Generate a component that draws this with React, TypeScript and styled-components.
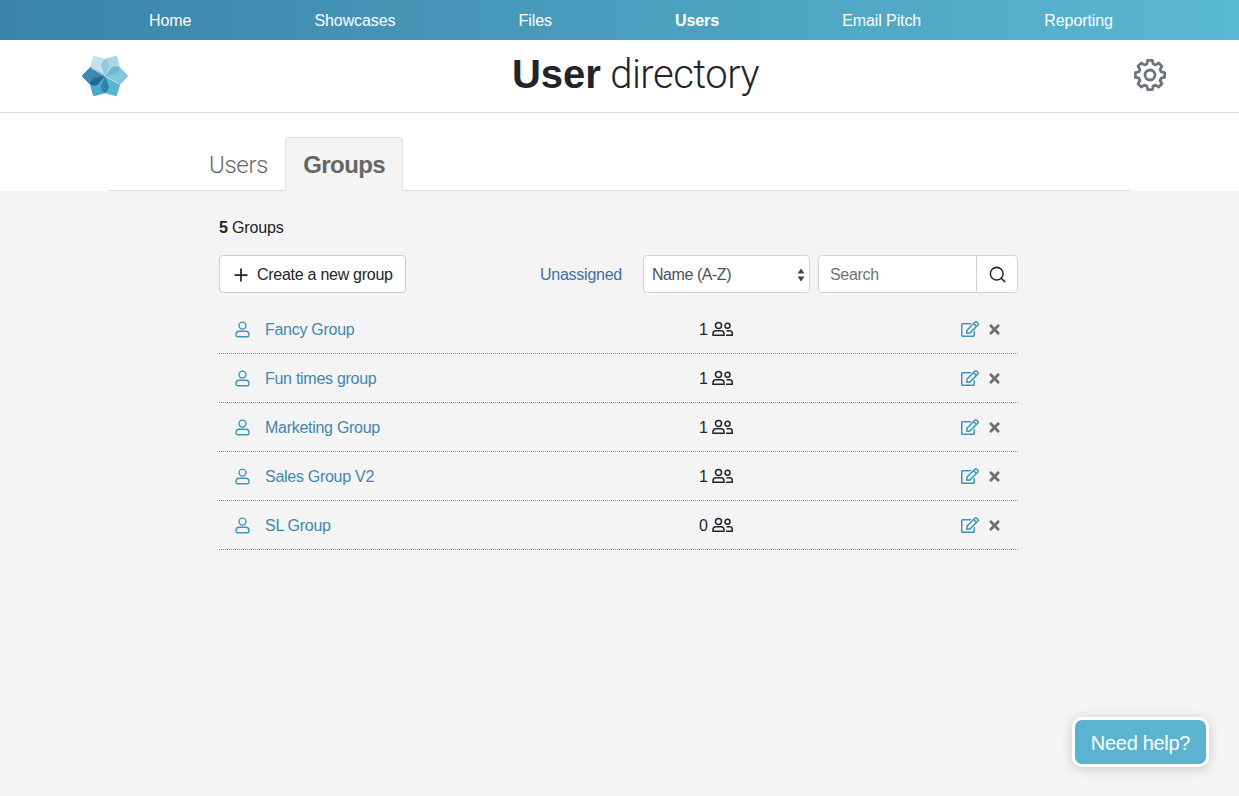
import React from "react";
import styled, { createGlobalStyle } from "styled-components";
import { Plus, Search } from "lucide-react";
import { FaRegEdit, FaTimes } from "react-icons/fa";

const Global = createGlobalStyle`
  html, body { margin: 0; padding: 0; height: 100%; }
  body { font-family: "Liberation Sans", Arial, sans-serif; background: #f4f4f4; color: #212529; }
  #root { height: 100%; }
`;

const Page = styled.div`
  height: 796px;
  position: relative;
  overflow: hidden;
  background: #f4f4f4;
`;

const Nav = styled.nav`
  height: 40px;
  display: flex;
  align-items: center;
  gap: 123.2px;
  padding-left: 149px;
  background: linear-gradient(90deg, #3a84a9 0%, #5ab7d3 100%);
`;

const NavLink = styled.a<{ $active?: boolean }>`
  color: #fff;
  font-size: 16px;
  letter-spacing: -0.1px;
  padding-top: 1px;
  font-weight: ${(p) => (p.$active ? 700 : 400)};
  white-space: nowrap;
`;

const Header = styled.header`
  height: 72px;
  background: #fff;
  border-bottom: 1px solid #dcdcdc;
  display: grid;
  grid-template-columns: 1fr auto 1fr;
  align-items: center;
  padding: 0 72px 0 81px;
`;

const LogoSlot = styled.div`
  display: flex;
  align-items: center;
`;

const Title = styled.h1`
  margin: 0 0 4px;
  font-size: 40px;
  line-height: 48px;
  font-weight: 300;
  font-family: Roboto, "Liberation Sans", sans-serif;
  letter-spacing: -0.5px;
  color: #212529;
  padding-left: 23px;
  b {
    font-family: "Liberation Sans", Arial, sans-serif;
    font-weight: 700;
    letter-spacing: 0;
  }
`;

const GearSlot = styled.div`
  display: flex;
  justify-content: flex-end;
  margin-bottom: 2px;
`;

const TabBand = styled.div`
  height: 78px;
  background: #fff;
  padding: 0 108px 0 107px;
  box-sizing: border-box;
`;

const TabRow = styled.div`
  height: 78px;
  box-sizing: border-box;
  border-bottom: 1px solid #dee2e6;
  display: flex;
  align-items: flex-end;
  padding-left: 84px;
`;

const Tab = styled.a<{ $active?: boolean }>`
  box-sizing: border-box;
  height: 54px;
  margin-bottom: -1px;
  margin-left: ${(p) => (p.$active ? "-1px" : "0")};
  padding: 2px 17px 0;
  display: flex;
  align-items: center;
  font-size: 24px;
  letter-spacing: ${(p) => (p.$active ? "-0.55px" : "-0.3px")};
  color: #666;
  font-family: ${(p) => (p.$active ? '"Liberation Sans", Arial, sans-serif' : 'Roboto, "Liberation Sans", sans-serif')};
  font-weight: ${(p) => (p.$active ? 700 : 300)};
  background: ${(p) => (p.$active ? "#f4f4f4" : "transparent")};
  border: 1px solid ${(p) => (p.$active ? "#dee2e6" : "transparent")};
  border-bottom-color: ${(p) => (p.$active ? "#f4f4f4" : "transparent")};
  border-radius: 4px 4px 0 0;
`;

const Content = styled.main`
  width: 799px;
  margin-left: 219px;
  padding-top: 27px;
`;

const Count = styled.div`
  font-size: 16px;
  line-height: 20px;
  letter-spacing: -0.15px;
  color: #212529;
  b { font-weight: 700; }
`;

const Toolbar = styled.div`
  margin-top: 17px;
  height: 38px;
  display: flex;
  align-items: stretch;
`;

const CreateButton = styled.button`
  box-sizing: border-box;
  width: 187px;
  display: flex;
  align-items: center;
  gap: 6px;
  padding: 1px 0 0 11px;
  background: #fff;
  border: 1px solid #ccc;
  border-radius: 4px;
  font: inherit;
  font-size: 16px;
  letter-spacing: -0.27px;
  color: #212529;
`;

const Unassigned = styled.a`
  margin-left: auto;
  margin-right: 21px;
  padding-top: 1px;
  align-self: center;
  font-size: 16px;
  letter-spacing: -0.25px;
  color: #3f6ea0;
`;

const SortBox = styled.div`
  box-sizing: border-box;
  width: 167px;
  margin-right: 8px;
  background: #fff;
  border: 1px solid #ced4da;
  border-radius: 4px;
  display: flex;
  align-items: center;
  justify-content: space-between;
  padding: 1px 4px 0 8px;
  font-size: 16px;
  letter-spacing: -0.45px;
  color: #495057;
`;

const SearchGroup = styled.div`
  box-sizing: border-box;
  width: 200px;
  display: flex;
  background: #fff;
  border: 1px solid #ced4da;
  border-radius: 4px;
`;

const SearchLabel = styled.div`
  flex: 1;
  display: flex;
  align-items: center;
  padding: 1px 0 0 11px;
  font-size: 16px;
  letter-spacing: -0.3px;
  color: #6c757d;
`;

const SearchAddon = styled.div`
  width: 40px;
  border-left: 1px solid #ced4da;
  display: flex;
  align-items: center;
  justify-content: center;
  color: #212529;
`;

const List = styled.div`
  margin-top: 12px;
`;

const Row = styled.div`
  box-sizing: border-box;
  height: 49px;
  display: grid;
  grid-template-columns: 480px 80px 1fr;
  align-items: center;
  border-bottom: 1px dotted #888;
`;

const NameCell = styled.div`
  display: flex;
  align-items: center;
  gap: 15px;
  padding: 2px 0 0 16px;
  font-size: 16px;
  letter-spacing: -0.28px;
  color: #3f88ad;
  svg { margin-top: -2px; }
`;

const CountCell = styled.div`
  display: flex;
  align-items: center;
  gap: 4px;
  padding-top: 2px;
  font-size: 16px;
  color: #212529;
  svg { margin-top: -2px; }
`;

const Actions = styled.div`
  display: flex;
  justify-content: flex-end;
  align-items: center;
  gap: 8px;
  padding-right: 16px;
`;

const EditIcon = styled(FaRegEdit)`
  color: #3f94b8;
  font-size: 18px;
`;

const CloseIcon = styled(FaTimes)`
  color: #6f6f6f;
  font-size: 15px;
`;

const HelpButton = styled.div`
  position: absolute;
  left: 1072px;
  top: 717px;
  box-sizing: border-box;
  width: 137px;
  height: 50px;
  padding-top: 2px;
  background: #5ab4d0;
  border: 3px solid #fff;
  border-radius: 10px;
  box-shadow: 0 2px 12px rgba(0, 0, 0, 0.18);
  color: #fff;
  font-size: 20px;
  letter-spacing: -0.3px;
  display: flex;
  align-items: center;
  justify-content: center;
`;

const Logo = () => {
  const kites: [number, string][] = [
    [-30, "#c4e2ec"],
    [30, "#a9d7e5"],
    [90, "#82c6db"],
    [150, "#58b6d3"],
    [210, "#4aa9cd"],
    [270, "#3a8ab1"],
  ];
  const petals: [number, string][] = [
    [0, "#8fcbdc"],
    [60, "#6db8d1"],
    [180, "#2f80ac"],
    [240, "#1f6a97"],
  ];
  return (
    <svg width="48" height="44" viewBox="-24 -22 48 44">
      {kites.map(([r, c]) => (
        <g key={r} transform={`rotate(${r})`}>
          <path d="M0 0 L-8 -14.500 L-0.500 -22 L0.500 -22 L8 -14.500 Z" fill={c} stroke={c} strokeWidth="1.600" strokeLinejoin="round" />
        </g>
      ))}
      {kites.map(([r]) => (
        <line key={r} x1="0" y1="0" x2="0" y2="-16" transform={`rotate(${r + 30})`} stroke="#fff" strokeWidth="0.6" />
      ))}
      {petals.map(([r, c]) => (
        <path key={r} transform={`rotate(${r})`} d="M0 0 L-4 -10.500 Q-3 -15.500 0 -17 Q3 -15.500 4 -10.500 Z" fill={c} />
      ))}
    </svg>
  );
};

const gearPath = (() => {
  const teeth = 8;
  const pts: string[] = [];
  for (let i = 0; i < teeth; i++) {
    const a = (i * 2 * Math.PI) / teeth;
    const step = (2 * Math.PI) / teeth;
    const pt = (r: number, t: number) =>
      `${(17 + r * Math.sin(t)).toFixed(2)} ${(17 - r * Math.cos(t)).toFixed(2)}`;
    pts.push(pt(11.5, a - step * 0.36), pt(14.8, a - step * 0.2), pt(14.8, a + step * 0.2), pt(11.5, a + step * 0.36));
  }
  return `M${pts.join("L")}Z`;
})();

const Gear = () => (
  <svg width="34" height="34" viewBox="0 0 34 34" fill="none" stroke="#6c757d" strokeWidth="2.800" strokeLinejoin="round">
    <path d={gearPath} />
    <circle cx="17" cy="17" r="5" />
  </svg>
);

const PersonIcon = () => (
  <svg width="15" height="17" viewBox="0 0 15 17" fill="none" stroke="#3f94b8" strokeWidth="1.400">
    <circle cx="7.500" cy="4.600" r="3.500" />
    <path d="M1 14v-.6c0-1.900 1.400-3.200 3.200-3.200h6.600c1.800 0 3.200 1.300 3.200 3.200v.6c0 1-.7 1.800-1.700 1.800H2.700C1.700 15.800 1 15 1 14z" />
  </svg>
);

const PeopleIcon = () => (
  <svg width="21" height="16" viewBox="0 0 21 16" fill="none" stroke="#212529" strokeWidth="1.500">
    <circle cx="6.500" cy="4.500" r="3" />
    <path d="M1 14.200v-1.400c0-1.800 1.300-3 3-3h5c1.700 0 3 1.200 3 3v1.400z" />
    <circle cx="15.500" cy="4.800" r="2.500" />
    <path d="M14.500 9.800h3c1.600 0 2.700.9 2.700 2.200v2.200h-6.200" />
  </svg>
);

const ArrowPair = () => (
  <svg width="8" height="14" viewBox="0 0 8 14" fill="#444">
    <path d="M4 0.500 L7.500 5.500 H0.500 Z" />
    <path d="M4 13.500 L7.500 8.500 H0.500 Z" />
  </svg>
);

const navItems = ["Home", "Showcases", "Files", "Users", "Email Pitch", "Reporting"];
const groups = [
  { name: "Fancy Group", n: 1 },
  { name: "Fun times group", n: 1 },
  { name: "Marketing Group", n: 1 },
  { name: "Sales Group V2", n: 1 },
  { name: "SL Group", n: 0 },
];

export default function App() {
  return (
    <Page>
      <Global />
      <Nav>
        {navItems.map((item) => (
          <NavLink key={item} $active={item === "Users"}>
            {item}
          </NavLink>
        ))}
      </Nav>
      <Header>
        <LogoSlot>
          <Logo />
        </LogoSlot>
        <Title>
          <b>User</b> directory
        </Title>
        <GearSlot>
          <Gear />
        </GearSlot>
      </Header>
      <TabBand>
        <TabRow>
          <Tab>Users</Tab>
          <Tab $active>Groups</Tab>
        </TabRow>
      </TabBand>
      <Content>
        <Count>
          <b>5</b> Groups
        </Count>
        <Toolbar>
          <CreateButton>
            <Plus size={20} strokeWidth={2.1} />
            Create a new group
          </CreateButton>
          <Unassigned>Unassigned</Unassigned>
          <SortBox>
            Name (A-Z)
            <ArrowPair />
          </SortBox>
          <SearchGroup>
            <SearchLabel>Search</SearchLabel>
            <SearchAddon>
              <Search size={19} strokeWidth={1.9} />
            </SearchAddon>
          </SearchGroup>
        </Toolbar>
        <List>
          {groups.map((g) => (
            <Row key={g.name}>
              <NameCell>
                <PersonIcon />
                {g.name}
              </NameCell>
              <CountCell>
                {g.n}
                <PeopleIcon />
              </CountCell>
              <Actions>
                <EditIcon />
                <CloseIcon />
              </Actions>
            </Row>
          ))}
        </List>
      </Content>
      <HelpButton>Need help?</HelpButton>
    </Page>
  );
}
